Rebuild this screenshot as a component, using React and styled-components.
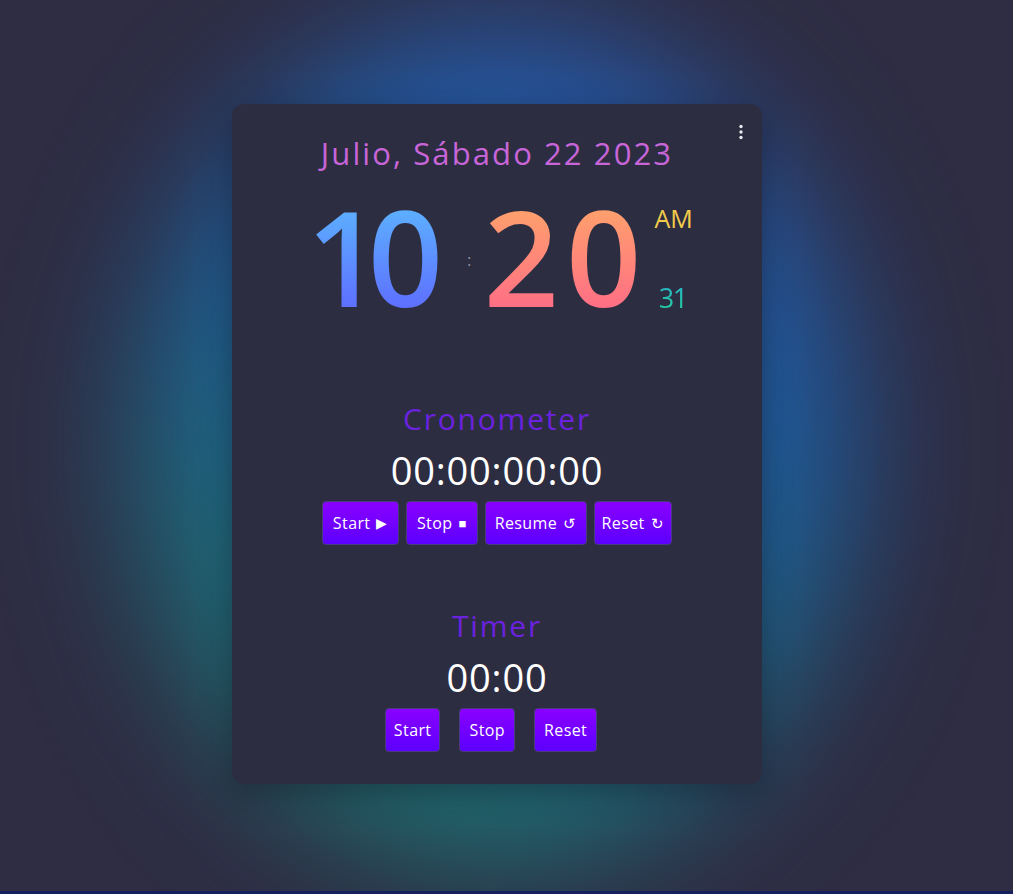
import React from "react";
import styled, { createGlobalStyle } from "styled-components";

const Global = createGlobalStyle`
  html, body { margin: 0; padding: 0; }
  body {
    background: #17205e;
    font-family: "Open Sans", "Noto Sans", sans-serif;
    overflow: hidden;
  }
`;

const Page = styled.div`
  height: 891px;
  background: #2e2d44;
  display: flex;
  justify-content: center;
  align-items: flex-start;
  padding: 104px 19px 0 0;
  box-sizing: border-box;
  position: relative;
  overflow: hidden;
`;

const Glow = styled.div`
  position: absolute;
  left: 135px;
  top: 25px;
  width: 720px;
  height: 840px;
  border-radius: 50%;
  background: linear-gradient(205deg, #2b56b0 0%, #1d5c9c 40%, #1d6b7a 70%, #1f7563 100%);
  filter: blur(65px);
`;

const Card = styled.div`
  position: relative;
  width: 530px;
  height: 680px;
  background: #2d2d42;
  border-radius: 12px;
  box-shadow: 0 8px 30px rgba(20, 20, 35, 0.45);
  display: flex;
  flex-direction: column;
  align-items: center;
  box-sizing: border-box;
  padding-top: 28px;
`;

const Menu = styled.button`
  position: absolute;
  right: 16px;
  top: 18px;
  background: none;
  border: none;
  padding: 2px;
  cursor: pointer;
  display: flex;
`;

const DateText = styled.div`
  font-size: 31px;
  line-height: 42px;
  color: #c865d8;
  letter-spacing: 2.1px;
`;

const ClockRow = styled.div`
  display: flex;
  align-items: flex-start;
  margin-top: 16px;
  margin-left: 5px;
`;

const Digits = styled.div`
  font-size: 132px;
  font-weight: 600;
  line-height: 132px;
  letter-spacing: ${(p) => p.$spacing}px;
  padding: 0 24px;
  margin: 0 -24px;
  background: linear-gradient(180deg, ${(p) => p.$from}, ${(p) => p.$to});
  -webkit-background-clip: text;
  background-clip: text;
  color: transparent;
`;

const Colon = styled.div`
  font-size: 17px;
  color: #8b8b9a;
  align-self: center;
  margin: 6px 12px 0 38px;
`;

const Side = styled.div`
  display: flex;
  flex-direction: column;
  justify-content: space-between;
  align-items: center;
  height: 111px;
  margin-left: 6px;
  margin-top: 13px;
`;

const AmPm = styled.div`
  font-size: 25px;
  line-height: 30px;
  color: #f4cc4a;
`;

const Seconds = styled.div`
  font-size: 27px;
  line-height: 32px;
  letter-spacing: -1.5px;
  padding-right: 2px;
  background: linear-gradient(180deg, #2bb4d0, #1ecf95);
  -webkit-background-clip: text;
  background-clip: text;
  color: transparent;
`;

const Section = styled.section`
  display: flex;
  flex-direction: column;
  align-items: center;
  margin-top: ${(p) => p.$top}px;
`;

const Title = styled.h2`
  margin: 0;
  font-size: 30px;
  font-weight: 400;
  line-height: 40px;
  letter-spacing: 1.8px;
  color: #6a22df;
`;

const Display = styled.div`
  font-size: 38px;
  line-height: 48px;
  letter-spacing: 0.8px;
  color: #ffffff;
  margin-top: 7px;
`;

const Buttons = styled.div`
  display: flex;
  gap: ${(p) => p.$gap}px;
  margin-top: 7px;
  margin-right: ${(p) => p.$shift || 0}px;
`;

const Button = styled.button`
  height: 44px;
  padding: 0 ${(p) => p.$pad || 10}px;
  border: 1px solid #4a3a80;
  border-radius: 4px;
  background: linear-gradient(180deg, #8a00ff, #5c00ff);
  color: #ffffff;
  font-family: inherit;
  font-size: 16px;
  font-weight: 500;
  letter-spacing: 0.4px;
  display: flex;
  align-items: center;
  gap: 6px;
  cursor: pointer;
`;

const Glyph = styled.span`
  font-size: ${(p) => p.$size || 15}px;
  line-height: 1;
`;

export default function App() {
  return (
    <>
      <Global />
      <Page>
        <Glow />
        <Card>
          <Menu aria-label="menu">
            <svg width="6" height="16" viewBox="0 0 6 16">
              <circle cx="3" cy="2.5" r="1.7" fill="#e8e8f0" />
              <circle cx="3" cy="8" r="1.7" fill="#e8e8f0" />
              <circle cx="3" cy="13.5" r="1.7" fill="#e8e8f0" />
            </svg>
          </Menu>
          <DateText>Julio, Sábado 22 2023</DateText>
          <ClockRow>
            <Digits $spacing={-14} $from="#5cbcff" $to="#5e66ff">10</Digits>
            <Colon>:</Colon>
            <Digits $spacing={7} $from="#ffaa68" $to="#ff6888">20</Digits>
            <Side>
              <AmPm>AM</AmPm>
              <Seconds>31</Seconds>
            </Side>
          </ClockRow>
          <Section $top={77}>
            <Title>Cronometer</Title>
            <Display>00:00:00:00</Display>
            <Buttons $gap={7}>
              <Button $pad={10}>Start <Glyph $size={14}>▶</Glyph></Button>
              <Button>Stop <Glyph $size={13}>■</Glyph></Button>
              <Button $pad={9}>Resume <Glyph>↺</Glyph></Button>
              <Button $pad={7}>Reset <Glyph>↻</Glyph></Button>
            </Buttons>
          </Section>
          <Section $top={61}>
            <Title>Timer</Title>
            <Display>00:00</Display>
            <Buttons $gap={19} $shift={12}>
              <Button $pad={8}>Start</Button>
              <Button $pad={9}>Stop</Button>
              <Button $pad={9}>Reset</Button>
            </Buttons>
          </Section>
        </Card>
      </Page>
    </>
  );
}
